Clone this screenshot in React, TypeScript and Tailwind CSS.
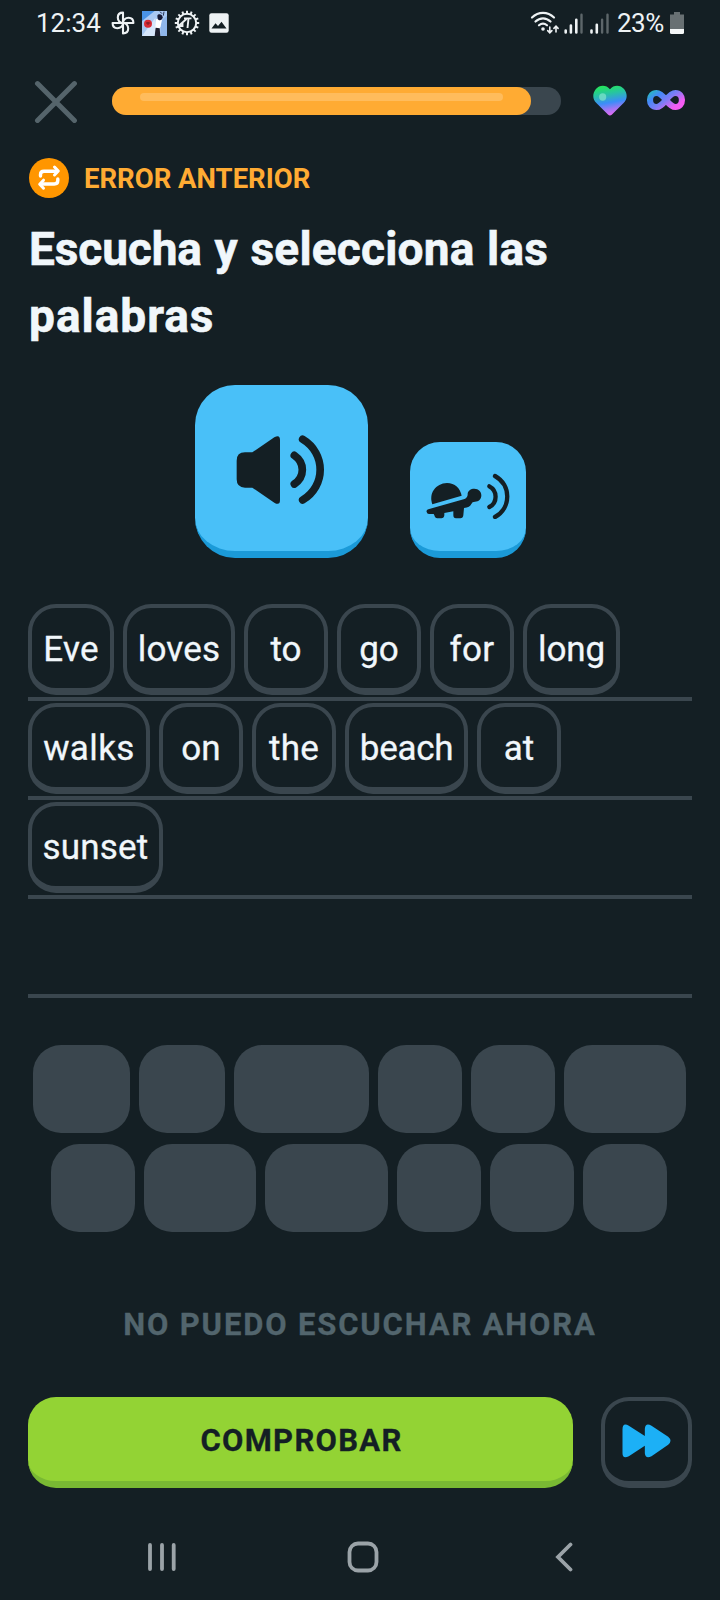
type Chip = { word: string; box: string; spacing: string };

const answerRows: Chip[][] = [
  [
    { word: 'Eve', box: 'w-[86px]', spacing: 'tracking-[0.2px]' },
    { word: 'loves', box: 'w-[112px]', spacing: 'tracking-[0.2px]' },
    { word: 'to', box: 'w-[84px]', spacing: 'tracking-[0px]' },
    { word: 'go', box: 'w-[84px]', spacing: 'tracking-[0px]' },
    { word: 'for', box: 'w-[84px]', spacing: 'tracking-[0.4px]' },
    { word: 'long', box: 'w-[97px]', spacing: 'tracking-[-0.1px]' },
  ],
  [
    { word: 'walks', box: 'w-[122px]', spacing: 'tracking-[0.4px]' },
    { word: 'on', box: 'w-[84px]', spacing: 'tracking-[0px]' },
    { word: 'the', box: 'w-[84px]', spacing: 'tracking-[0.3px]' },
    { word: 'beach', box: 'w-[123px]', spacing: 'tracking-[-0.3px]' },
    { word: 'at', box: 'w-[84px]', spacing: 'tracking-[0px]' },
  ],
  [{ word: 'sunset', box: 'w-[135px]', spacing: 'tracking-[0.2px]' }],
  [],
];

const bankRows: string[][] = [
  ['w-[97px]', 'w-[86px]', 'w-[135px]', 'w-[84px]', 'w-[84px]', 'w-[122px]'],
  ['w-[84px]', 'w-[112px]', 'w-[123px]', 'w-[84px]', 'w-[84px]', 'w-[84px]'],
];

function StatusBar() {
  const teeth = Array.from({ length: 16 }, (_, i) => i * 22.5);
  return (
    <div className="flex h-[46px] items-center pl-[36px] pr-[36px] text-[#eef2f4]">
      <span className="w-[75px] text-[26px] leading-[46px]">12:34</span>
      <svg className="h-6 w-6" viewBox="0 0 24 24" fill="none" stroke="currentColor" strokeWidth="2.1" strokeLinejoin="round">
        <path d="M12 12V1.6C8.6 1.6 6.8 3.6 6.8 6.4C6.8 9.6 8.8 12 12 12Z" />
        <path d="M12 12H22.4C22.4 8.6 20.4 6.8 17.6 6.8C14.4 6.8 12 8.8 12 12Z" />
        <path d="M12 12V22.4C15.4 22.4 17.2 20.4 17.2 17.6C17.2 14.4 15.2 12 12 12Z" />
        <path d="M12 12H1.6C1.6 15.4 3.6 17.2 6.4 17.2C9.6 17.2 12 15.2 12 12Z" />
      </svg>
      <svg className="ml-[7px] h-[25px] w-[25px]" viewBox="0 0 75 75">
        <rect width="75" height="75" fill="#a9c9f3" />
        <path d="M0 0H38L0 30Z" fill="#4a93e6" />
        <path d="M0 75L40 20L46 75Z" fill="#d6e6fb" />
        <path d="M56 75V30L75 14V75Z" fill="#8fb6ea" />
        <circle cx="18" cy="38" r="12" fill="#d92b35" />
        <path d="M12 36H25M18 33V42" stroke="#761a26" strokeWidth="3" />
        <path d="M42 26C46 20 56 20 60 26L56 46L52 53L40 51Z" fill="#fff" />
        <path d="M46 14C48 8 61 8 62 19C61 29 51 30 47 24Z" fill="#161a35" />
        <path d="M66 2L64 14M54 2L60 8" stroke="#2a3352" strokeWidth="3" />
        <path d="M41 50L53 52L55 75H38Z" fill="#1c1d2c" />
      </svg>
      <svg className="ml-[7px] h-[26px] w-[26px]" viewBox="0 0 26 26" fill="none" stroke="currentColor">
        <circle cx="13" cy="13" r="9.2" strokeWidth="2" />
        {teeth.map((a) => (
          <path key={a} d="M13 0.8V3.6" strokeWidth="2" transform={`rotate(${a} 13 13)`} />
        ))}
        <path d="M10 8.4H17.5M14.5 8.4L13.5 18M4.5 16L12.5 9M8.5 12.5V16H4.5" strokeWidth="1.9" />
      </svg>
      <svg className="ml-[9px] h-5 w-5" viewBox="0 0 20 20">
        <rect x="0.3" y="0.3" width="19.4" height="19.4" rx="2.2" fill="#eef2f4" />
        <path d="M2.5 15.5L6.5 10.3L9 13L12.5 8.8L17.5 15.5Z" fill="#141f24" />
      </svg>
      <div className="grow" />
      <svg className="h-[26px] w-[84px]" viewBox="0 0 84 26" fill="none" stroke="currentColor" strokeLinecap="round">
        <path d="M2 7.5C8.5 1.2 17.5 1.2 24 7.5M5.5 11.5C10 7.2 16 7.2 20.5 11.5M9 15.3C11.6 13 14.4 13 17 15.3" strokeWidth="2.2" />
        <circle cx="13" cy="19" r="1.8" fill="currentColor" stroke="none" />
        <path d="M19.8 17V22.5M17.7 20.6L19.8 22.8L21.9 20.6M26 22V16.4M23.9 18.4L26 16.2L28.1 18.4" strokeWidth="1.6" />
        <path d="M35.7 20.5V22.5M40.9 15.5V22.5M46.3 9.8V22.5M61.5 20.5V22.5M66.8 14.8V22.5" strokeWidth="2.6" />
        <path d="M51.5 4.8V22.5M72.1 9.8V22.5M77.5 4.8V22.5" stroke="#5d666a" strokeWidth="2.4" />
      </svg>
      <span className="ml-[3px] w-[50px] text-[26px] leading-[46px] tracking-[-0.5px]">23%</span>
      <svg className="ml-[3px] h-[22px] w-[14px]" viewBox="0 0 14 22">
        <path d="M4 0H10V2.5H14V17H0V2.5H4Z" fill="#687073" />
        <path d="M0 17H14V20.5Q14 22 12.5 22H1.5Q0 22 0 20.5Z" fill="#f4f7f8" />
      </svg>
    </div>
  );
}

function LessonHeader() {
  return (
    <div className="flex h-[110px] items-center pl-[34px] pr-[34px]">
      <svg className="mt-[2px] h-[44px] w-[44px]" viewBox="0 0 44 44" stroke="#55646b" strokeWidth="5" strokeLinecap="round">
        <path d="M3.5 3.5L40.5 40.5M40.5 3.5L3.5 40.5" />
      </svg>
      <div className="ml-[34px] h-7 w-[450px] rounded-full bg-[#3a464e]">
        <div className="h-7 w-[419px] rounded-full bg-[#ffab33] px-7 pt-[6px]">
          <div className="h-2 rounded-full bg-[#ffbc5c]" />
        </div>
      </div>
      <svg className="mb-[1px] ml-[31px] h-[31px] w-[36px]" viewBox="0 0 37 31" preserveAspectRatio="none">
        <defs>
          <linearGradient id="heart" x1="0.3" y1="0" x2="0.5" y2="1">
            <stop offset="0" stopColor="#25e658" />
            <stop offset="0.28" stopColor="#27c5a0" />
            <stop offset="0.58" stopColor="#3b8df8" />
            <stop offset="0.8" stopColor="#a276f4" />
            <stop offset="1" stopColor="#e76af5" />
          </linearGradient>
        </defs>
        <path d="M18.5 4.2C22.5 -0.7 29.5 -0.2 33 4C36.8 8.7 36.5 14 32.5 18L20.6 29.6Q18.5 31.4 16.4 29.6L4.5 18C0.5 14 0.2 8.7 4 4C7.5 -0.2 14.5 -0.7 18.5 4.2Z" fill="url(#heart)" />
        <circle cx="11" cy="12" r="3.7" fill="#7ee3c9" opacity="0.75" />
      </svg>
      <svg className="mb-[3px] ml-[18px] h-[22px] w-[40px]" viewBox="0 0 40 22" fill="none">
        <defs>
          <linearGradient id="infinity" x1="0" y1="0" x2="1" y2="0.6">
            <stop offset="0" stopColor="#2bb3c8" />
            <stop offset="0.25" stopColor="#4488f7" />
            <stop offset="0.6" stopColor="#7f7cf6" />
            <stop offset="1" stopColor="#f45cf2" />
          </linearGradient>
        </defs>
        <path d="M20 11C16.5 6.5 14 4 10.5 4C6.5 4 4 7 4 11C4 15 6.5 18 10.5 18C14 18 16.5 15.5 20 11C23.5 6.5 26 4 29.5 4C33.5 4 36 7 36 11C36 15 33.5 18 29.5 18C26 18 23.5 15.5 20 11Z" stroke="url(#infinity)" strokeWidth="6.2" />
      </svg>
    </div>
  );
}

function AudioButtons() {
  return (
    <div className="mt-[36px] flex items-end justify-center gap-[42px]">
      <button className="flex h-[173px] w-[173px] items-center justify-center rounded-[40px] border-b-[7px] border-[#1b9ad8] bg-[#49c0f8]">
        <svg className="mt-[3px] h-[70px] w-[90px]" viewBox="170 193 270 210" fill="#141f24">
          <path d="M172 270Q172 245 197 245H219L285 200Q302 190 302 208V388Q302 406 285 396L219 351H197Q172 351 172 326Z" />
          <path d="M345 254C377 276 377 318 345 340" fill="none" stroke="#141f24" strokeWidth="23" strokeLinecap="round" />
          <path d="M370 206C440 248 440 346 370 388" fill="none" stroke="#141f24" strokeWidth="23" strokeLinecap="round" />
        </svg>
      </button>
      <button className="flex h-[116px] w-[116px] items-center justify-center rounded-[30px] border-b-[7px] border-[#1b9ad8] bg-[#49c0f8]">
        <svg className="mb-[1px] h-[46px] w-[84px]" viewBox="77 131 252 138" fill="#141f24">
          <path d="M96 225C84 192 106 162 140 161C164 161 179 176 184 199Z" />
          <path d="M79 248Q77 242 84 240L190 210Q200 207 202 197C201 184 211 178 222 178C235 178 243 187 243 198C243 210 235 217 224 217Q215 217 213 224Q209 234 191 236L189 258Q188 267 180 267H167Q159 267 159 258V246L132 251V258Q131 267 123 267H111Q104 267 102 258L100 254H86Q80 254 79 248Z" />
          <path d="M267 171C292 184 292 220 267 233" fill="none" stroke="#141f24" strokeWidth="13" strokeLinecap="round" />
          <path d="M284 140C333 167 333 236 284 263" fill="none" stroke="#141f24" strokeWidth="13" strokeLinecap="round" />
        </svg>
      </button>
    </div>
  );
}

function AnswerArea() {
  return (
    <div className="mt-[44px] px-7">
      {answerRows.map((row, i) => (
        <div key={i} className="flex h-[99px] gap-[9px] border-b-4 border-[#3a464e] pt-[2px]">
          {row.map((c) => (
            <button
              key={c.word}
              className={`h-[91px] ${c.box} ${c.spacing} rounded-[28px] border-4 border-b-[7px] border-[#3a464e] pt-[2px] text-center text-[35px] leading-[80px] whitespace-nowrap text-[#f1f7fb] [-webkit-text-stroke:0.3px_#f1f7fb]`}
            >
              {c.word}
            </button>
          ))}
        </div>
      ))}
    </div>
  );
}

function WordBank() {
  return (
    <div className="mt-[47px] flex flex-col gap-[11px] pr-[2px]">
      {bankRows.map((row, i) => (
        <div key={i} className="flex justify-center gap-[9px]">
          {row.map((w, j) => (
            <div key={j} className={`h-[88px] ${w} rounded-[28px] bg-[#3a464e]`} />
          ))}
        </div>
      ))}
    </div>
  );
}

function NavBar() {
  return (
    <div className="mt-[53px] flex h-8 items-center text-[#9ba3a8]">
      <svg className="ml-[147px] h-[30px] w-[30px]" viewBox="0 0 30 30" stroke="currentColor" strokeLinecap="round" strokeWidth="3.8">
        <path d="M3 3V27M15 3V27M26.7 3V27" />
      </svg>
      <svg className="ml-[170px] h-8 w-8" viewBox="0 0 32 32" fill="none" stroke="currentColor" strokeWidth="3.8">
        <rect x="2.5" y="2.5" width="27" height="27" rx="8.5" />
      </svg>
      <svg className="ml-[175px] h-[30px] w-5" viewBox="0 0 20 30" fill="none" stroke="currentColor" strokeWidth="3.8" strokeLinecap="round">
        <path d="M16.5 2.5L4 15L16.5 27.5" />
      </svg>
    </div>
  );
}

export default function App() {
  return (
    <div className="h-[1600px] w-[720px] overflow-hidden bg-[#141f24] font-['Roboto',sans-serif]">
      <StatusBar />
      <LessonHeader />
      <div className="mt-[2px] flex h-10 items-center pl-[29px]">
        <svg className="h-10 w-10" viewBox="0 0 40 40" fill="none" stroke="#fff">
          <circle cx="20" cy="20" r="20" fill="#ff9600" stroke="none" />
          <path d="M11.5 18V16.5Q11.5 13.2 15 13.2H26.5M28.8 21V22.5Q28.8 26 25.3 26H13.5" strokeWidth="3.4" strokeLinecap="round" />
          <path d="M25.5 9L29.3 13L25.5 17M14.5 22.2L10.7 26.2L14.5 30.2" strokeWidth="3" strokeLinecap="round" strokeLinejoin="round" />
        </svg>
        <span className="ml-[15px] pt-[2px] text-[27.5px] leading-[38px] font-bold text-[#ffab33]">ERROR ANTERIOR</span>
      </div>
      <h1 className="mt-[18px] mb-[-1px] pl-[29px] text-[46px] leading-[67px] font-bold tracking-[0.2px] [word-spacing:1px] text-[#f1f7fb] [-webkit-text-stroke:0.6px_#f1f7fb]">
        <span className="tracking-[-0.1px]">Escucha</span> y selecciona las
        <br />
        <span className="tracking-[1px]">palabras</span>
      </h1>
      <AudioButtons />
      <AnswerArea />
      <WordBank />
      <button className="mt-[69px] mb-[-1px] block h-12 w-full text-center text-[31px] leading-[48px] font-bold tracking-[1.85px] text-[#52656d] [-webkit-text-stroke:0.3px_#52656d]">
        NO PUEDO ESCUCHAR AHORA
      </button>
      <div className="mt-[49px] flex gap-7 pl-7">
        <button className="h-[91px] w-[545px] rounded-[28px] border-b-[7px] border-[#79b933] bg-[#93d334] pt-[3px] pl-[2px] text-center text-[31px] leading-[81px] font-bold tracking-[1.3px] text-[#141f24] [-webkit-text-stroke:0.3px_#141f24]">
          COMPROBAR
        </button>
        <button className="flex h-[91px] w-[91px] items-center justify-center rounded-[28px] border-4 border-b-[7px] border-[#3a464e]">
          <svg className="h-[34px] w-[49px]" viewBox="668 132 146 102" fill="#1cb0f6">
            <path d="M669 148Q669 127 688 137L736 168V146Q738 127 756 137L806 170Q820 182 806 194L756 229Q738 238 736 220V197L688 229Q669 238 669 220Z" />
          </svg>
        </button>
      </div>
      <NavBar />
    </div>
  );
}
